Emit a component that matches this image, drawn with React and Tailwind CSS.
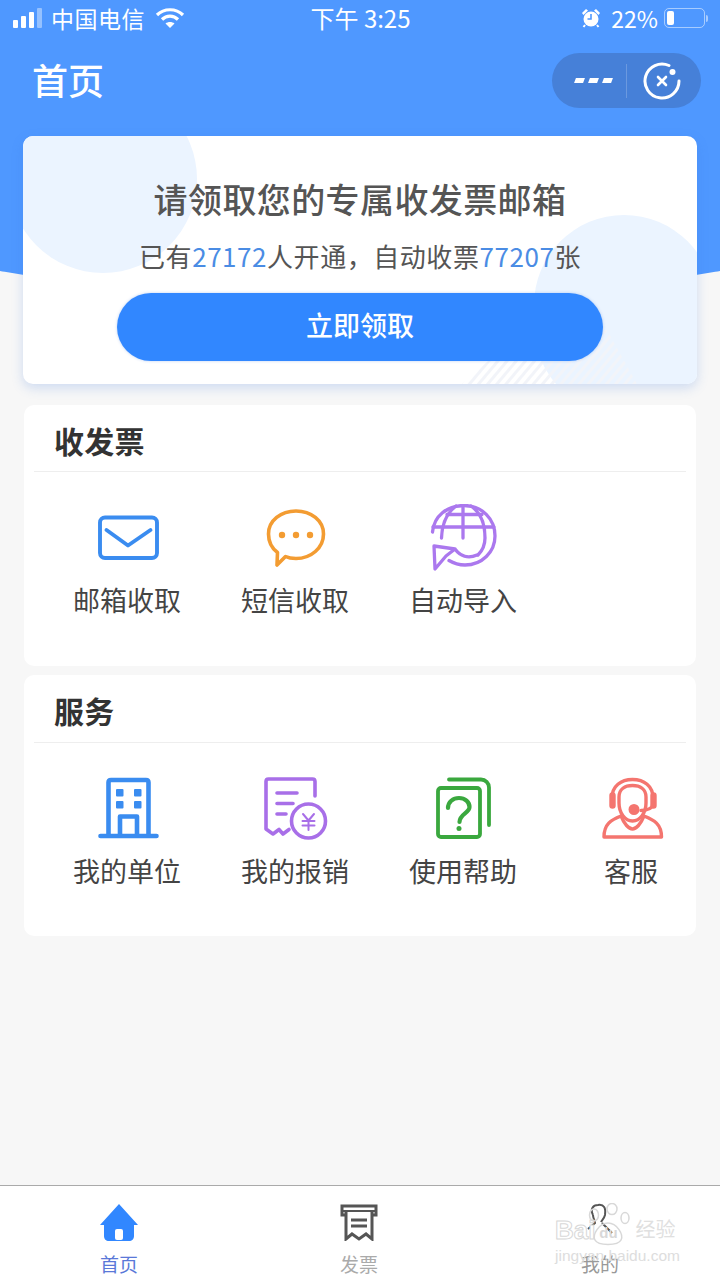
import React from "react";

const cjk = "font-['Noto_Sans_CJK_SC','Noto_Sans',sans-serif]";

const MailIcon = () => (
  <svg width="76" height="68" viewBox="89 504 76 68" fill="none" stroke="#3a8cf0" strokeWidth="3.900" strokeLinecap="round" strokeLinejoin="round">
    <rect x="100" y="517.500" width="57" height="40.500" rx="5" />
    <path d="M106.500 530 L128 545.500 L150.500 530" />
  </svg>
);

const SmsIcon = () => (
  <svg width="76" height="68" viewBox="257 504 76 68" fill="none">
    <path d="M296 511 C311 511 323.500 520.500 323.500 534 C323.500 548 311 558.500 296 558.500 C292 558.500 288.500 558 285.500 556.500 L277 565 L277.500 552.500 C271.500 548 268.500 541.500 268.500 534 C268.500 520.500 281 511 296 511 Z" stroke="#f39c32" strokeWidth="3.600" strokeLinejoin="round" />
    <circle cx="282" cy="535" r="3.200" fill="#f39c32" />
    <circle cx="296" cy="535" r="3.200" fill="#f39c32" />
    <circle cx="310" cy="535" r="3.200" fill="#f39c32" />
  </svg>
);

const GlobeIcon = () => (
  <svg width="76" height="68" viewBox="425 504 76 68" fill="none" stroke="#ab78ee" strokeWidth="3.300" strokeLinejoin="round" strokeLinecap="round">
    <path d="M432.500 532 C434 516 447 505.500 464 505.500 C482 505.500 495 519 495 536 C495 552 482 565 465 565 C459 565 454 563.500 449 560.500" />
    <path d="M433 527 H494 M447 514.500 H482 M463 505.500 V538" />
    <path d="M456 506 C448 512 442 523 441.500 538 M471 506 C480 512 485 523 485 538 C485 545 483 550 478 555" />
    <path d="M434 546 L455 549 L446 556 L435 569 Z M455 549 C460 556 468 559 477 555" />
  </svg>
);

const BuildingIcon = () => (
  <svg width="76" height="68" viewBox="89 775 76 68" fill="none" stroke="#3a8cf0" strokeWidth="4.600" strokeLinejoin="round" strokeLinecap="round">
    <path d="M108.500 835 V782.500 C108.500 781 109.500 780 111 780 H146 C147.500 780 148.500 781 148.500 782.500 V835" />
    <path d="M100.500 836 H156.500" />
    <path d="M120 835 V816.500 H137 V835" />
    <g fill="#3a8cf0" stroke="none">
      <rect x="116" y="789" width="7.500" height="7.500" rx="1" />
      <rect x="134" y="789" width="7.500" height="7.500" rx="1" />
      <rect x="116" y="801" width="7.500" height="7.500" rx="1" />
      <rect x="134" y="801" width="7.500" height="7.500" rx="1" />
    </g>
  </svg>
);

const ReceiptIcon = () => (
  <svg width="76" height="68" viewBox="257 775 76 68" fill="none" stroke="#a86fe8" strokeWidth="3.600" strokeLinecap="round" strokeLinejoin="round">
    <path d="M315 796 V781.500 C315 780 314 779 312.500 779 H268.500 C267 779 266 780 266 781.500 V829 L273 834 L279 829.500 L283 834 L289 829.500" />
    <path d="M277 793 H297 M277 803.500 H293 M277 814 H286" />
    <circle cx="308.500" cy="821" r="17" />
    <path d="M303 814 L308.500 820.500 L314 814 M302.500 821 H314.500 M302.500 825.500 H314.500 M308.500 820.500 V830" strokeWidth="2" />
  </svg>
);

const HelpIcon = () => (
  <svg width="76" height="68" viewBox="425 775 76 68" fill="none" stroke="#3aa83e" strokeWidth="3.800" strokeLinecap="round" strokeLinejoin="round">
    <rect x="438" y="788" width="42" height="49" rx="3" />
    <path d="M449 779.500 H481 C485.500 779.500 489 783 489 787.500 V825" />
    <path d="M448 808 C448 802 453 798 459 798 C465 798 469.500 802 469.500 807 C469.500 813 459.500 814 459.500 822" strokeWidth="4.200" />
    <circle cx="459" cy="828.500" r="2.500" fill="#3aa83e" stroke="none" />
  </svg>
);

const AgentIcon = () => (
  <svg width="76" height="68" viewBox="593 775 76 68" fill="none" stroke="#f4756f" strokeWidth="3.400" strokeLinecap="round" strokeLinejoin="round">
    <path d="M612 798 C612 786 621 779.500 632.500 779.500 C644 779.500 653 786 653 798" />
    <rect x="611" y="794" width="3" height="13" rx="1.500" fill="#f4756f" />
    <rect x="652" y="794" width="3" height="13" rx="1.500" fill="#f4756f" />
    <path d="M619 797 C619 789 625 785.500 632.500 785.500 C640 785.500 646 789 646 797 V803 C646 813 640 821 632.500 821 C625 821 619 813 619 803 Z" />
    <path d="M653 803 C653 808 648 810.500 641 810.500" />
    <circle cx="634" cy="809.500" r="3.800" fill="#f4756f" />
    <path d="M621 816 C611 820 604 824 604 837 H661.500 C661.500 824 654 820 644 816 C641 824 636 829 632.500 829 C629 829 624 824 621 816 Z" />
  </svg>
);

const sections = [
  {
    title: "收发票",
    headerHeight: "h-[67px]",
    items: [
      { label: "邮箱收取", icon: <MailIcon /> },
      { label: "短信收取", icon: <SmsIcon /> },
      { label: "自动导入", icon: <GlobeIcon /> },
    ],
  },
  {
    title: "服务",
    headerHeight: "h-[68px]",
    items: [
      { label: "我的单位", icon: <BuildingIcon /> },
      { label: "我的报销", icon: <ReceiptIcon /> },
      { label: "使用帮助", icon: <HelpIcon /> },
      { label: "客服", icon: <AgentIcon /> },
    ],
  },
];

const Section = ({ title, items, headerHeight, className }) => (
  <section className={`mx-px h-[261px] rounded-[10px] bg-white ${className}`}>
    <div className={`mx-[10px] flex items-center border-b border-[#eeeeee] pt-[3px] pl-5 ${headerHeight}`}>
      <h2 className="text-[30px] leading-none font-bold tracking-[0.3px] text-[#333333]">{title}</h2>
    </div>
    <div className="flex gap-14 pt-8 pl-[47px]">
      {items.map((item) => (
        <div key={item.label} className="flex w-28 flex-col items-center">
          {item.icon}
          <span className="mt-2 text-[27px] leading-10 whitespace-nowrap text-[#444444]">{item.label}</span>
        </div>
      ))}
    </div>
  </section>
);

const StatusBar = () => (
  <div className="flex h-10 items-center pb-1 text-white">
    <div className="flex flex-1 items-center pl-[13px]">
      <div className="flex h-5 items-end gap-[3px]">
        <span className="h-2 w-[5px] rounded-[1px] bg-white" />
        <span className="h-3 w-[5px] rounded-[1px] bg-white" />
        <span className="h-4 w-[5px] rounded-[1px] bg-white" />
        <span className="h-5 w-[5px] rounded-[1px] bg-white/40" />
      </div>
      <span className="ml-[9px] text-[23px] leading-none tracking-[0.5px]">中国电信</span>
      <svg className="ml-[10px]" width="30" height="22" viewBox="0 0 30 22" fill="none" stroke="white" strokeWidth="3.200">
        <path d="M2 8 C9 1 21 1 28 8" />
        <path d="M7 12.500 C11.500 8 18.500 8 23 12.500" />
        <path d="M15 21 L10.500 16.500 C13 14.500 17 14.500 19.500 16.500 Z" fill="white" stroke="none" />
      </svg>
    </div>
    <span className="text-[24px] leading-none">下午 3:25</span>
    <div className="flex flex-1 items-center justify-end pr-3">
      <svg width="20" height="20" viewBox="0 0 20 20" fill="white">
        <path d="M1 5 L5 1 L7 2.500 L2.500 7 Z M19 5 L15 1 L13 2.500 L17.500 7 Z" />
        <circle cx="10" cy="11" r="7.500" />
        <path d="M10 6 V11 H6.500" stroke="#4f98ff" strokeWidth="1.600" fill="none" />
        <path d="M4 17 L2.500 19 M16 17 L17.500 19" stroke="white" strokeWidth="2" />
      </svg>
      <span className="ml-[10px] text-[23px] leading-none">22%</span>
      <div className="ml-[6px] flex h-5 w-[41px] items-center rounded-[5px] border border-white/50 px-[2px]">
        <span className="h-[14px] w-[7px] rounded-[2px] bg-white" />
      </div>
      <span className="ml-px h-[7px] w-[2px] rounded-r bg-white/50" />
    </div>
  </div>
);

const NavBar = () => (
  <div className="flex h-[81px] items-center justify-between pr-[19px] pl-8">
    <h1 className="pb-1 text-[36px] leading-none font-medium text-white">首页</h1>
    <div className="flex h-[55px] w-[149px] items-center rounded-full bg-[#4680d8]">
      <div className="flex w-[74px] justify-end gap-[5px] pr-[14px]">
        <span className="h-[5px] w-[9px] -skew-x-[20deg] bg-white" />
        <span className="h-[5px] w-[9px] -skew-x-[20deg] bg-white" />
        <span className="h-[5px] w-[9px] -skew-x-[20deg] bg-white" />
      </div>
      <span className="h-[34px] w-px bg-white/20" />
      <svg className="ml-4" width="38" height="38" viewBox="0 0 38 38" fill="none" stroke="white">
        <path d="M26 3.500 A17 17 0 1 0 36 19" strokeWidth="3" strokeLinecap="round" />
        <circle cx="29.500" cy="10" r="3" fill="white" stroke="none" />
        <path d="M15 15 L23 23 M23 15 L15 23" strokeWidth="2.600" strokeLinecap="round" />
      </svg>
    </div>
  </div>
);

const PromoCard = () => (
  <div className="relative mx-[23px] mt-[15px] h-[248px] overflow-hidden rounded-[10px] bg-white shadow-[0_4px_12px_rgba(60,120,220,0.22)]">
    <div className="absolute top-[-51px] left-[-14px] h-[188px] w-[188px] rounded-full bg-[#ebf4ff]" />
    <div className="absolute top-[79px] left-[511px] h-[200px] w-[180px] rounded-full bg-[#ebf4ff]" />
    <svg className="absolute bottom-0 left-[416px]" width="200" height="64" viewBox="0 0 200 64">
      <defs>
        <pattern id="hatch" width="7" height="7" patternUnits="userSpaceOnUse" patternTransform="rotate(40)">
          <rect width="3" height="7" fill="#f2f4f9" />
        </pattern>
      </defs>
      <path d="M23 64 L90 5 L168 10 L198 64 Z" fill="url(#hatch)" />
    </svg>
    <div className="relative flex flex-col items-center">
      <h2 className="mt-[41px] text-[34px] leading-11 font-medium tracking-[0.4px] text-[#555555]">请领取您的专属收发票邮箱</h2>
      <p className="mt-[13px] text-[26px] leading-11 tracking-[0.55px] text-[#555555]">
        已有<span className="text-[#4a8ce4]">27172</span>人开通，自动收票<span className="text-[#4a8ce4]">77207</span>张
      </p>
      <button className="mt-[15px] h-[68px] w-[486px] rounded-full bg-[#3187ff] pb-1 text-[27px] font-medium text-white shadow-[0_0_3px_rgba(60,120,220,0.35)]">
        立即领取
      </button>
    </div>
  </div>
);

const TabBar = () => (
  <div className="mt-auto flex h-[95px] border-t border-[#aaaaaa] bg-white">
    <div className="flex w-[238px] flex-col items-center pt-[17px]">
      <svg width="40" height="38" viewBox="0 0 40 38">
        <path d="M20 1 L39 22 L35 22 V33 C35 36 33 38 30 38 H10 C7 38 5 36 5 33 V22 L1 22 Z" fill="#3187ff" />
        <rect x="16" y="26" width="8" height="11" rx="2" fill="white" />
      </svg>
      <span className="mt-[11px] text-[19px] leading-6 text-[#5a78d8]">首页</span>
    </div>
    <div className="flex w-[242px] flex-col items-center pt-[17px]">
      <svg width="40" height="38" viewBox="0 0 40 38" fill="none" stroke="#555555" strokeWidth="3">
        <path d="M7 12 H3 V3 H37 V12 H33" />
        <path d="M3 8 H37" strokeWidth="2" />
        <path d="M7 8 V36 L13 31 L20 36 L27 31 L33 36 V8" />
        <path d="M12 17 H28 M12 23 H28" />
      </svg>
      <span className="mt-[11px] text-[19px] leading-6 text-[#aaaaaa]">发票</span>
    </div>
    <div className="flex w-[240px] flex-col items-center pt-[17px]">
      <svg width="40" height="38" viewBox="0 0 40 38" fill="none" stroke="#555555" strokeWidth="2">
        <path d="M13 12 C10 6 13 2 18 2 C24 1 26 5 25 12 C24 16 22 17 21 19" />
        <path d="M13 12 C13 16 15 17 15 20 L8 26 M22 20 L32 30" />
      </svg>
      <span className="mt-[11px] text-[19px] leading-6 text-[#999999]">我的</span>
    </div>
  </div>
);

const Watermark = () => (
  <div className="absolute top-[1203px] left-[555px] flex w-[125px] flex-col">
    <div className="flex h-[45px] items-end">
      <span className="mb-[4px] font-['Liberation_Sans',sans-serif] text-[26px] leading-7 font-bold text-white [-webkit-text-stroke:1px_#d8d8d8]">Bai</span>
      <div className="relative ml-[-13px] h-[45px] w-12 shrink-0">
        <svg className="absolute inset-0" width="48" height="45" viewBox="0 0 48 45" fill="none" stroke="#d8d8d8" strokeWidth="1.500">
          <ellipse cx="12" cy="12" rx="4.500" ry="6" />
          <ellipse cx="30" cy="6" rx="5" ry="5.500" />
          <ellipse cx="43" cy="15" rx="4" ry="5.500" />
          <path d="M26 20 C35 20 42 32 39 37 C36 43 16 43 13 37 C10 32 17 20 26 20 Z" />
        </svg>
        <span className="absolute inset-x-0 bottom-[7px] pl-1 text-center font-['Liberation_Sans',sans-serif] text-[15px] leading-4 font-bold text-[#d8d8d8]">du</span>
      </div>
      <span className="mb-[7px] ml-[5px] text-[20px] leading-6 whitespace-nowrap text-[#e0e0e0]">经验</span>
    </div>
    <span className="font-['Liberation_Sans',sans-serif] text-[15.500px] leading-4 whitespace-nowrap text-[#dddddd]">jingyan.baidu.com</span>
  </div>
);

export default function App() {
  return (
    <div className={`relative flex h-[1280px] w-[720px] flex-col overflow-hidden bg-[#f7f7f7] ${cjk}`}>
      <div className="absolute top-0 left-[-200px] h-[299px] w-[1120px] rounded-b-[560px_120px] bg-[#4f98ff]" />
      <div className="relative flex flex-1 flex-col">
        <StatusBar />
        <NavBar />
        <PromoCard />
        <div className="mx-[23px]">
          <Section {...sections[0]} className="mt-[21px]" />
          <Section {...sections[1]} className="mt-[9px]" />
        </div>
        <TabBar />
      </div>
      <Watermark />
    </div>
  );
}
